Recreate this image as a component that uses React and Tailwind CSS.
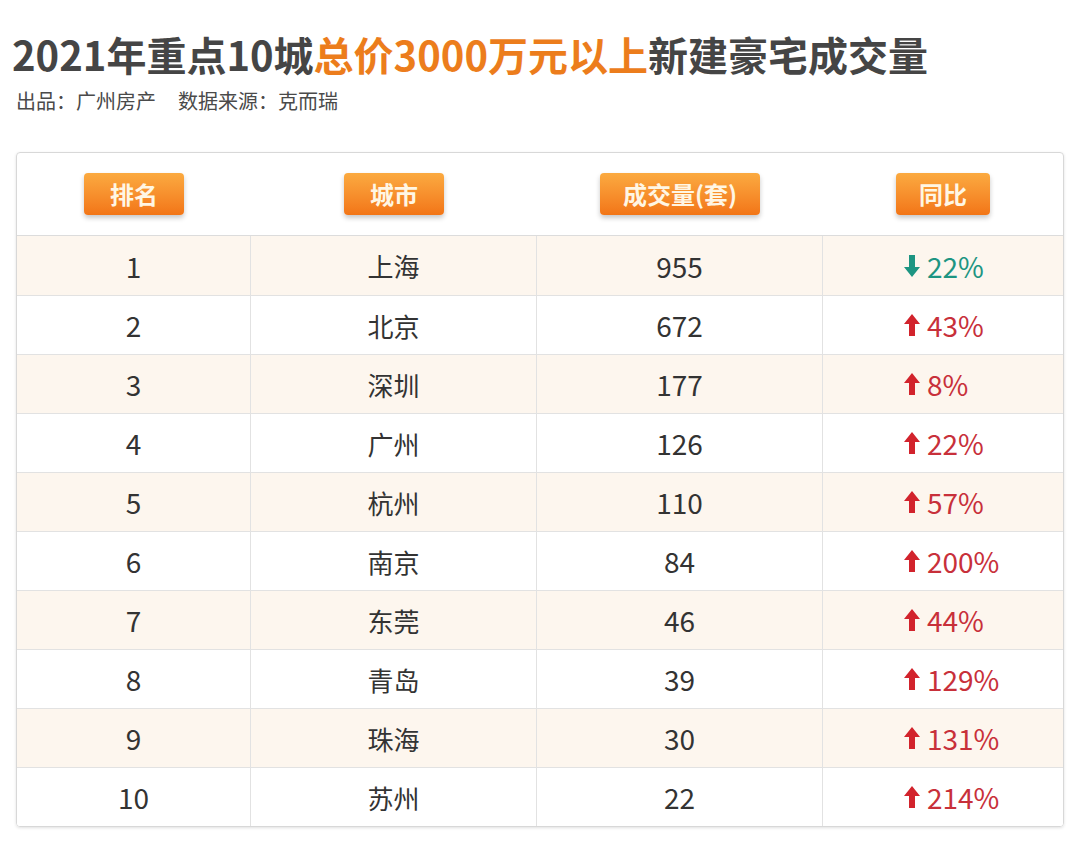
const rows = [
  { rank: 1, city: '上海', count: 955, pct: '22%', up: false },
  { rank: 2, city: '北京', count: 672, pct: '43%', up: true },
  { rank: 3, city: '深圳', count: 177, pct: '8%', up: true },
  { rank: 4, city: '广州', count: 126, pct: '22%', up: true },
  { rank: 5, city: '杭州', count: 110, pct: '57%', up: true },
  { rank: 6, city: '南京', count: 84, pct: '200%', up: true },
  { rank: 7, city: '东莞', count: 46, pct: '44%', up: true },
  { rank: 8, city: '青岛', count: 39, pct: '129%', up: true },
  { rank: 9, city: '珠海', count: 30, pct: '131%', up: true },
  { rank: 10, city: '苏州', count: 22, pct: '214%', up: true },
]

function Arrow({ up }) {
  return (
    <svg width="16" height="22" viewBox="0 0 16 22" className="shrink-0">
      {up ? (
        <polygon points="8,0 16,10 11,10 11,22 5,22 5,10 0,10" fill="#d2232c" />
      ) : (
        <polygon points="8,22 16,12 11,12 11,0 5,0 5,12 0,12" fill="#1d9582" />
      )}
    </svg>
  )
}

function HeadBtn({ children, w }) {
  return (
    <div
      className={`${w} h-[42px] rounded-[4px] bg-gradient-to-b from-[#fbaa40] to-[#f27516] shadow-[0_3px_5px_rgba(0,0,0,0.22)] flex items-center justify-center text-[24px] font-bold text-[#fff6e4]`}
    >
      {children}
    </div>
  )
}

export default function App() {
  return (
    <div
      className="w-[1080px] h-[844px] bg-white overflow-hidden"
      style={{ fontFamily: '"Noto Sans CJK SC", "Noto Sans", sans-serif' }}
    >
      <h1 className="pt-[30px] pl-[12px] text-[40px] leading-[48px] font-bold text-[#454545]">
        2021年重点10城<span className="text-[#ec7d1c]">总价3000万元以上</span>新建豪宅成交量
      </h1>
      <p className="mt-[11px] pl-[16px] text-[20px] leading-[24px] text-[#4a4a4a]">
        出品：广州房产<span className="ml-[22px]">数据来源：克而瑞</span>
      </p>

      <div className="mt-[39px] ml-[16px] w-[1048px] border border-[#d8d8d8] rounded-[4px] shadow-[0_1px_3px_rgba(0,0,0,0.12)] overflow-hidden">
        <div className="h-[83px] grid grid-cols-[234px_286px_286px_1fr] items-center border-b border-[#dcdcdc]">
          <div className="flex justify-center"><HeadBtn w="w-[100px]">排名</HeadBtn></div>
          <div className="flex justify-center"><HeadBtn w="w-[100px]">城市</HeadBtn></div>
          <div className="flex justify-center"><HeadBtn w="w-[160px]">成交量(套)</HeadBtn></div>
          <div className="flex justify-center"><HeadBtn w="w-[94px]">同比</HeadBtn></div>
        </div>
        {rows.map((r, i) => (
          <div
            key={r.rank}
            className={`h-[59px] grid grid-cols-[234px_286px_286px_1fr] text-[#333] ${i > 0 ? 'border-t border-[#e2e2e2]' : ''} ${i % 2 === 0 ? 'bg-[#fdf6ee]' : 'bg-white'}`}
          >
            <div className="flex items-center justify-center border-r border-[#e2e2e2] text-[28px]">{r.rank}</div>
            <div className="flex items-center justify-center border-r border-[#e2e2e2] text-[26px]">{r.city}</div>
            <div className="flex items-center justify-center border-r border-[#e2e2e2] text-[28px]">{r.count}</div>
            <div className={`flex items-center gap-[7px] pl-[81px] text-[28px] ${r.up ? 'text-[#c8303a]' : 'text-[#1d9582]'}`}>
              <Arrow up={r.up} />
              <span>{r.pct}</span>
            </div>
          </div>
        ))}
      </div>
    </div>
  )
}
